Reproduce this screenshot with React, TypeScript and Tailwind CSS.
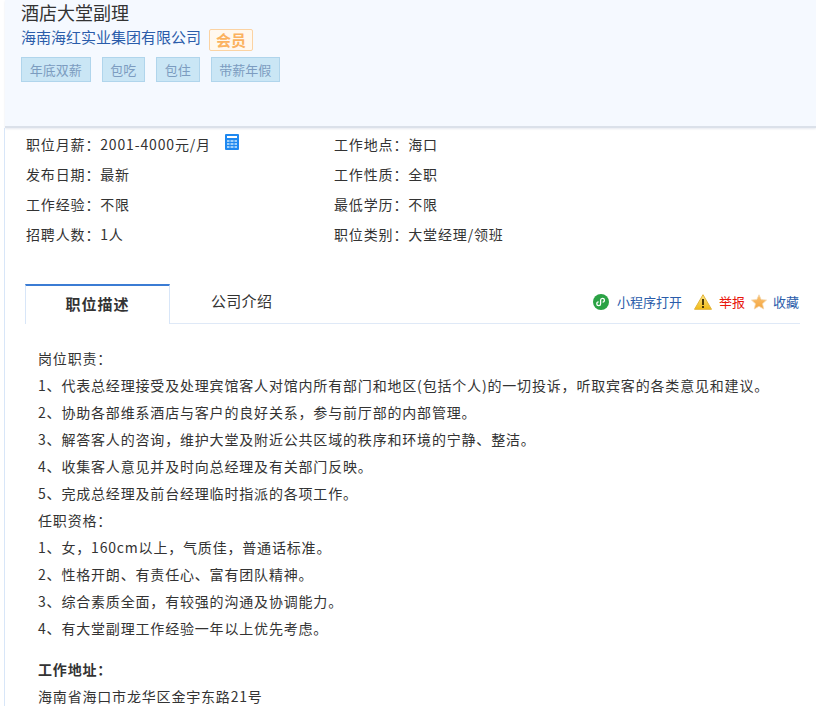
import React from 'react';

const tags = ['年底双薪', '包吃', '包住', '带薪年假'];

const infoRows = [
  ['职位月薪：2001-4000元/月', '工作地点：海口'],
  ['发布日期：最新', '工作性质：全职'],
  ['工作经验：不限', '最低学历：不限'],
  ['招聘人数：1人', '职位类别：大堂经理/领班'],
];

const duties = [
  '岗位职责：',
  '1、代表总经理接受及处理宾馆客人对馆内所有部门和地区(包括个人)的一切投诉，听取宾客的各类意见和建议。',
  '2、协助各部维系酒店与客户的良好关系，参与前厅部的内部管理。',
  '3、解答客人的咨询，维护大堂及附近公共区域的秩序和环境的宁静、整洁。',
  '4、收集客人意见并及时向总经理及有关部门反映。',
  '5、完成总经理及前台经理临时指派的各项工作。',
  '任职资格：',
  '1、女，160cm以上，气质佳，普通话标准。',
  '2、性格开朗、有责任心、富有团队精神。',
  '3、综合素质全面，有较强的沟通及协调能力。',
  '4、有大堂副理工作经验一年以上优先考虑。',
];

const CalcIcon = () => (
  <svg width="14" height="16" viewBox="0 0 14 16" className="mt-[-4px] ml-[14px] shrink-0">
    <rect width="14" height="16" rx="1" fill="#1e88f0" />
    <rect x="2" y="2" width="10" height="2" fill="#ffffff" />
    <rect x="2" y="6" width="10" height="8" fill="#9fd0fa" />
    <path d="M5 6v8M9 6v8M2 8.500h10M2 11.500h10" stroke="#1e88f0" strokeWidth="1" />
  </svg>
);

const MiniIcon = () => (
  <svg width="16" height="16" viewBox="0 0 16 16" className="shrink-0">
    <circle cx="8" cy="8" r="8" fill="#2ba245" />
    <path d="M5.200 7.900a1.900 1.900 0 1 0 2 1.900V6.200a1.900 1.900 0 1 1 2 1.900" transform="translate(0.400 0)" fill="none" stroke="#ffffff" strokeWidth="1.300" />
  </svg>
);

const WarnIcon = () => (
  <svg width="18" height="16" viewBox="0 0 18 16" className="shrink-0">
    <defs>
      <linearGradient id="warn" x1="0" y1="0" x2="0" y2="1">
        <stop offset="0" stopColor="#fbe58a" />
        <stop offset="1" stopColor="#f2bb14" />
      </linearGradient>
    </defs>
    <path d="M9 0.700 L17.500 15.300 H0.500 Z" fill="url(#warn)" stroke="#e2b53c" strokeWidth="1" strokeLinejoin="round" />
    <rect x="8" y="5" width="2" height="6" fill="#4a3808" />
    <rect x="8" y="12" width="2" height="2" fill="#4a3808" />
  </svg>
);

const StarIcon = () => (
  <svg width="16" height="16" viewBox="0 0 16 16" className="shrink-0">
    <defs>
      <linearGradient id="star" x1="0" y1="0" x2="0" y2="1">
        <stop offset="0" stopColor="#fac070" />
        <stop offset="1" stopColor="#f3a640" />
      </linearGradient>
    </defs>
    <path d="M8 0.800 L10.200 5.600 L15.500 6.100 L11.500 9.700 L12.700 15 L8 12.200 L3.300 15 L4.500 9.700 L0.500 6.100 L5.800 5.600 Z" fill="url(#star)" stroke="#f4d6ab" strokeWidth="0.800" />
  </svg>
);

export default function App() {
  return (
    <div
      className="h-[706px] w-[816px] overflow-hidden bg-white text-[#333333]"
      style={{ fontFamily: '"Noto Sans CJK SC", sans-serif' }}
    >
      {/* header */}
      <div className="ml-[5px] h-[128px] border-b-2 border-[#dbe1ea] bg-[#f5f9ff] pl-[16px] shadow-[0_1px_2px_#e6eaf0]">
        <h1 className="text-[18px] leading-[24px] font-normal text-[#333333]">酒店大堂副理</h1>
        <div className="mt-[2px] flex h-[26px] items-start">
          <span className="text-[15px] leading-[22px] text-[#2a5caa]">海南海红实业集团有限公司</span>
          <span className="mt-[3px] ml-[8px] flex h-[22px] w-[44px] items-center justify-center rounded-[2px] border border-[#fbd3a3] bg-[#fff8ef] text-[15px] font-bold text-[#fbb25f]">
            会员
          </span>
        </div>
        <div className="mt-[5px] flex gap-[11px]">
          {tags.map((t) => (
            <span
              key={t}
              className="flex h-[25px] items-center border border-[#b0d5ec] bg-[#cae6f5] px-[7.750px] text-[13px] text-[#7c9cc0]"
            >
              {t}
            </span>
          ))}
        </div>
      </div>

      <div className="ml-[4px] h-[578px] border-l border-[#d8e6f8]">
        {/* info */}
        <div className="pt-[1px] pl-[21px]">
          {infoRows.map(([l, r]) => (
            <div key={l} className="flex h-[30px] items-center text-[14px] tracking-[0.85px] text-[#333333]">
              <div className="flex w-[308px] items-center">
                <span>{l}</span>
                {l.includes('月薪') && <CalcIcon />}
              </div>
              <span>{r}</span>
            </div>
          ))}
        </div>

        {/* tabs */}
        <div className="mt-[35px] ml-[20px] flex h-[40px] w-[775px] items-stretch">
          <div className="flex w-[145px] items-center justify-center border-x border-t-2 border-x-[#d8e6f8] border-t-[#3b7cd4] pb-[2px] text-[15px] font-bold tracking-[1px]">
            职位描述
          </div>
          <div className="flex flex-1 items-center justify-between border-b border-[#dfe9f7] pb-[4px]">
            <span className="ml-[41px] text-[15px] tracking-[0.3px]">公司介绍</span>
            <div className="flex items-center pr-[1px] text-[13px] text-[#2a5caa]">
              <MiniIcon />
              <span className="ml-[8px]">小程序打开</span>
              <span className="ml-[12px]">
                <WarnIcon />
              </span>
              <span className="ml-[7px] text-[#e8160c]">举报</span>
              <span className="ml-[6px]">
                <StarIcon />
              </span>
              <span className="ml-[6px]">收藏</span>
            </div>
          </div>
        </div>

        {/* description */}
        <div className="pt-[21px] pl-[33px] text-[14px] leading-[27px] tracking-[0.82px] text-[#333333]">
          {duties.map((d) => (
            <p key={d}>{d}</p>
          ))}
          <h3 className="mt-[14px] text-[14px] font-bold">工作地址：</h3>
          <p>海南省海口市龙华区金宇东路21号</p>
        </div>
      </div>
    </div>
  );
}
